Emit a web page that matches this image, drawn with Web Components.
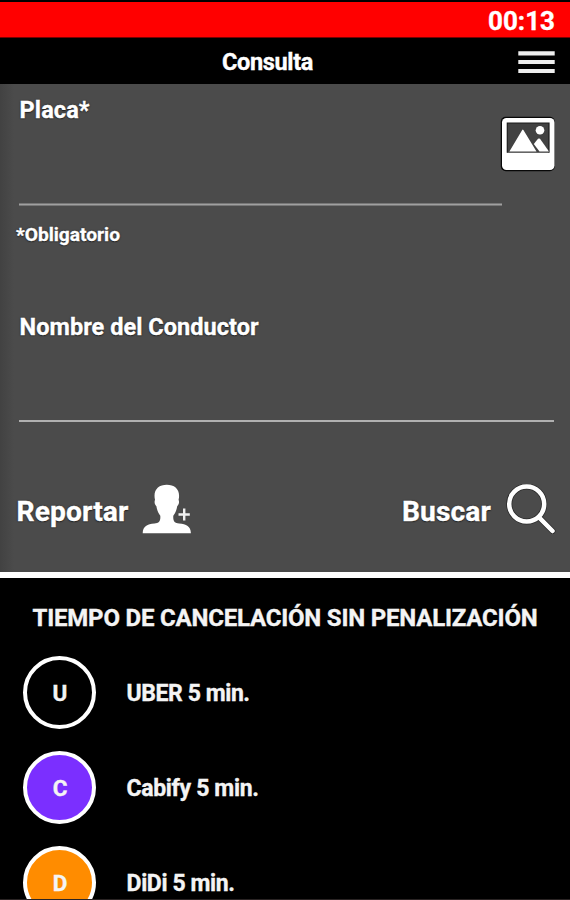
<!DOCTYPE html>
<html lang="es">
<head>
<meta charset="utf-8">
<title>Consulta</title>
<style>
html,body{margin:0;background:#000}
body{width:570px;height:900px;overflow:hidden;font-family:Roboto,"Liberation Sans",sans-serif;font-weight:700;color:#fff}
</style>
</head>
<body>
<consulta-app></consulta-app>
<script>
const define = (name, html, ready) => customElements.define(name, class extends HTMLElement {
  connectedCallback() {
    if (this.shadowRoot) return;
    const t = document.createElement('template');
    t.innerHTML = html;
    this.attachShadow({mode: 'open'}).append(t.content.cloneNode(true));
    if (ready) ready(this, this.shadowRoot);
  }
});

/* One-line label whose tracking is adjusted to a given width. */
define('fit-label', `<style>
:host{display:block;white-space:nowrap;line-height:30px;height:30px;flex:none;-webkit-text-stroke:.35px currentColor}
span{display:inline-block}
</style><span><slot></slot></span>`, (el, root) => {
  const span = root.querySelector('span');
  el.style.fontSize = el.getAttribute('size') + 'px';
  const w = +el.getAttribute('width');
  if (w) {
    const gap = (w - span.getBoundingClientRect().width) / el.textContent.length;
    span.style.letterSpacing = gap.toFixed(3) + 'px';
    el.style.width = w + 'px';
  }
});

define('timer-bar', `<style>
:host{display:flex;justify-content:flex-end;align-items:center;box-sizing:border-box;height:38px;border-top:2px solid #000;padding:2px 15px 0 0;background:linear-gradient(#f00 0 35px,#700 35px)}
</style><slot></slot>`);

define('menu-icon', `<style>:host{display:block;width:37px;height:23px}svg{display:block}</style>
<svg width="37" height="23"><path d="M.3 2.3h36.4M.3 11h36.4M.3 20h36.4" stroke="#ededed" stroke-width="4.2"/></svg>`);

define('title-bar', `<style>
:host{display:grid;grid-template-columns:222px 1fr auto;align-items:center;height:46px;box-sizing:border-box;padding:2px 15.5px 0 0;background:#000}
</style><i></i><slot></slot><menu-icon></menu-icon>`);

define('picture-icon', `<style>:host{display:block;width:56px;height:56px}svg{display:block}</style>
<svg width="56" height="56"><rect x=".8" y=".8" width="54" height="54.5" rx="5" fill="#080808"/><rect x="2" y="2" width="52.5" height="52" rx="4.5" fill="#fff"/>
<rect x="7.3" y="7.2" width="41.7" height="29.5" fill="#424242"/><path d="M7.3 36.7V7.2H49v29.5" fill="none" stroke="#1c1c1c" stroke-width="1.2"/>
<path d="M9.4 35.5 22.2 14Q22.8 13 23.4 14L36.5 35.5z" fill="#fff"/><path d="M33.8 28 38 22.8Q39 22 40 22.8L49 35.5H39.5z" fill="#fff"/><circle cx="40" cy="14.3" r="4.3" fill="#fff"/><path d="M8 36.5h40" stroke="#666"/></svg>`);

define('person-icon', `<style>:host{display:block;width:50px;height:50px}svg{display:block}</style>
<svg width="50" height="50"><path d="M.7 49.3c.2-7.2 4.6-9 11.8-9.7 4.5-.5 6.2-2.2 5.8-7.8-2-2.6-3.2-5.6-3.9-9.5-1.7-1.5-2.3-4-1.4-6.5C10.8 6.2 16.3.8 24.8.8s14 5.4 11.8 15c.9 2.5.3 5-1.4 6.5-.7 3.9-1.9 6.9-3.9 9.5-.4 5.6 1.3 7.3 5.8 7.8 7.2.7 11.6 2.5 11.8 9.7z" fill="#fff"/>
<path d="M36.5 30.5h11.3M42.2 24.6v12" stroke="#f2f2f2" stroke-width="2.4"/></svg>`);

define('search-icon', `<style>:host{display:block;width:50px;height:50px}svg{display:block}</style>
<svg width="50" height="50" fill="none" stroke-linecap="round"><g stroke="#2a2a2a" stroke-width="6"><circle cx="20.7" cy="20" r="17.5"/><path d="m34 34.3 12.5 12.7"/></g><g stroke="#fff" stroke-width="4.5"><circle cx="20.7" cy="20" r="17.5"/><path d="m34 34.3 12.5 12.7"/></g></svg>`);

/* Caption above an underlined entry area; the trailing slot holds a button. */
define('text-field', `<style>
:host{display:flex}
.entry{flex:1;display:flex;flex-direction:column;justify-content:space-between}
.entry::after{content:"";height:3px;background:linear-gradient(#777 0 1px,#a0a0a0 1px 2px,#777 2px)}
:host([thin]) .entry::after{height:2px;background:#b0b0b0}
</style><div class="entry"><slot></slot></div><slot name="action"></slot>`);

define('action-button', `<style>
:host{display:flex;align-items:center;height:50px}
</style><slot></slot><slot name="icon"></slot>`);

define('search-form', `<style>
:host{display:block;box-sizing:border-box;height:488px;background:linear-gradient(90deg,#424242,#4b4b4b 14px);padding:11px 16px 0 19px;text-shadow:0 0 2px #222,0 1px 1px #222}
.plate{height:111px}
.plate fit-label,.name fit-label{margin-left:.6px}
picture-icon{margin:21px -2px 0 -2px}
.name{height:110px;margin:62px 0 0}
.note{margin:14px 0 0 -3px}
.actions{display:flex;justify-content:space-between;margin:62px -2px 0 -2.5px}
.r{margin-left:13.5px}.b{margin-left:15px}
action-button fit-label{padding-top:5px}
</style>
<text-field class="plate"><fit-label size="23.5" width="70">Placa*</fit-label><picture-icon slot="action"></picture-icon></text-field>
<fit-label class="note" size="19.2" width="104">*Obligatorio</fit-label>
<text-field class="name" thin><fit-label size="23.5" width="239">Nombre del Conductor</fit-label></text-field>
<div class="actions">
<action-button><fit-label size="28.2" width="112">Reportar</fit-label><person-icon class="r" slot="icon"></person-icon></action-button>
<action-button><fit-label size="28.2" width="89">Buscar</fit-label><search-icon class="b" slot="icon"></search-icon></action-button>
</div>`);

define('service-row', `<style>
:host{display:flex;align-items:center;gap:30px;height:73px}
.badge{box-sizing:border-box;width:73px;height:73px;border:4px solid #fff;border-radius:50%;background:var(--tone,#000);display:grid;place-items:center;padding:1px 0 0 1px}
.badge,.text{flex:none}.text{padding:3px 0 0 .6px}
</style><div class="badge"><slot name="letter"></slot></div><div class="text"><slot></slot></div>`);

define('cancel-times', `<style>
:host{display:block;box-sizing:border-box;height:327px;overflow:hidden;border-top:6px solid #fff;background:#000;color:#f4f4f4}
.head{margin:25px 0 0 32.5px}
.list{display:flex;flex-direction:column;gap:22px;margin:23px 0 0 23px}
</style>
<fit-label class="head" size="24" width="505">TIEMPO DE CANCELACIÓN SIN PENALIZACIÓN</fit-label>
<div class="list">
<service-row><fit-label slot="letter" size="22.5">U</fit-label><fit-label size="23" width="123">UBER 5 min.</fit-label></service-row>
<service-row style="--tone:#7b2fff"><fit-label slot="letter" size="22.5">C</fit-label><fit-label size="23" width="132">Cabify 5 min.</fit-label></service-row>
<service-row style="--tone:#ff8c00"><fit-label slot="letter" size="22.5">D</fit-label><fit-label size="23" width="108">DiDi 5 min.</fit-label></service-row>
</div>`);

define('consulta-app', `<style>
:host{display:flex;flex-direction:column;width:570px;height:900px;overflow:hidden;background:#000}
timer-bar,title-bar,search-form,cancel-times{flex:none}
.end{height:1px;background:#2a2424}
</style>
<timer-bar><fit-label size="26" width="67">00:13</fit-label></timer-bar>
<title-bar><fit-label size="23.5" width="91">Consulta</fit-label></title-bar>
<search-form></search-form>
<cancel-times></cancel-times>
<div class="end"></div>`);
</script>
</body>
</html>
